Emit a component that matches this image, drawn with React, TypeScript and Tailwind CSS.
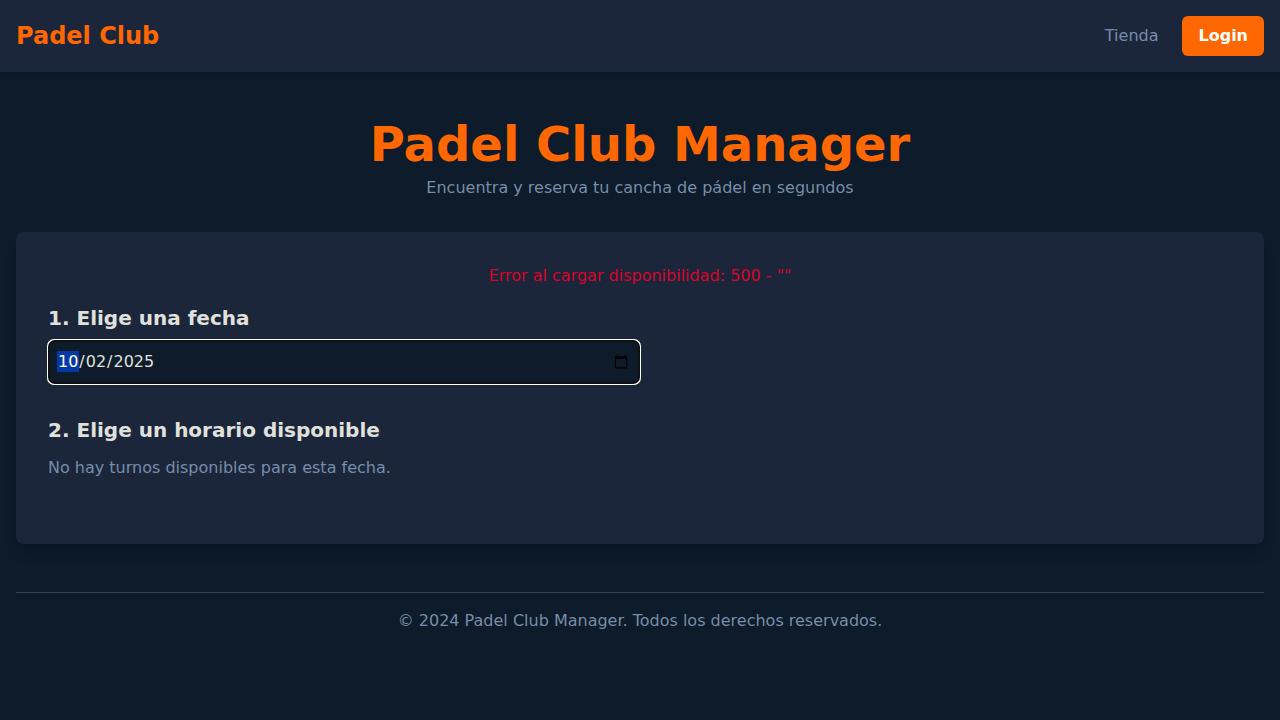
import { useState } from "react";

function Header() {
  return (
    <header className="bg-[#1b263b] shadow-md">
      <nav className="flex items-center justify-between p-4">
        <a href="#inicio" className="text-2xl font-bold text-[#ff6700]">
          Padel Club
        </a>
        <div className="flex items-center gap-6">
          <a href="#tienda" className="text-[#778da9]">
            Tienda
          </a>
          <button type="button" className="rounded-md bg-[#ff6700] px-4 py-2 font-bold text-white">
            Login
          </button>
        </div>
      </nav>
    </header>
  );
}

function Booking() {
  const [date, setDate] = useState("2025-10-02");

  return (
    <section className="rounded-lg bg-[#1b263b] p-8 shadow-[0_10px_15px_-3px_rgba(0,0,0,0.15),0_4px_6px_-4px_rgba(0,0,0,0.1)]">
      <p role="alert" className="mb-4 text-center text-[#d90429]">
        Error al cargar disponibilidad: 500 - ""
      </p>
      <div className="mb-8">
        <label htmlFor="fecha" className="mb-2 block text-xl font-semibold">
          1. Elige una fecha
        </label>
        <input
          id="fecha"
          type="date"
          autoFocus
          value={date}
          onChange={(event) => setDate(event.target.value)}
          className="block w-full rounded-md border border-[#415a77] bg-[#0d1b2a] p-2 text-[#e0e1dd] md:w-1/2 [&::-webkit-datetime-edit]:py-px [&::-webkit-datetime-edit-day-field]:py-px [&::-webkit-datetime-edit-month-field]:py-px [&::-webkit-datetime-edit-year-field]:py-px"
        />
      </div>
      <div className="mb-8">
        <h2 className="mb-3 text-xl font-semibold">2. Elige un horario disponible</h2>
        <p className="text-[#778da9]">No hay turnos disponibles para esta fecha.</p>
      </div>
    </section>
  );
}

export default function App() {
  return (
    <div className="min-h-screen bg-[#0d1b2a] font-['DejaVu_Sans',sans-serif] text-[#e0e1dd]">
      <Header />
      <main className="px-4 pt-12">
        <div className="mb-8 text-center">
          <h1 className="mb-2 text-5xl font-bold text-[#ff6700]">Padel Club Manager</h1>
          <p className="text-[#778da9]">Encuentra y reserva tu cancha de pádel en segundos</p>
        </div>
        <Booking />
        <footer className="mt-12 border-t border-gray-700 pt-4 text-center text-[#778da9]">
          © 2024 Padel Club Manager. Todos los derechos reservados.
        </footer>
      </main>
    </div>
  );
}
